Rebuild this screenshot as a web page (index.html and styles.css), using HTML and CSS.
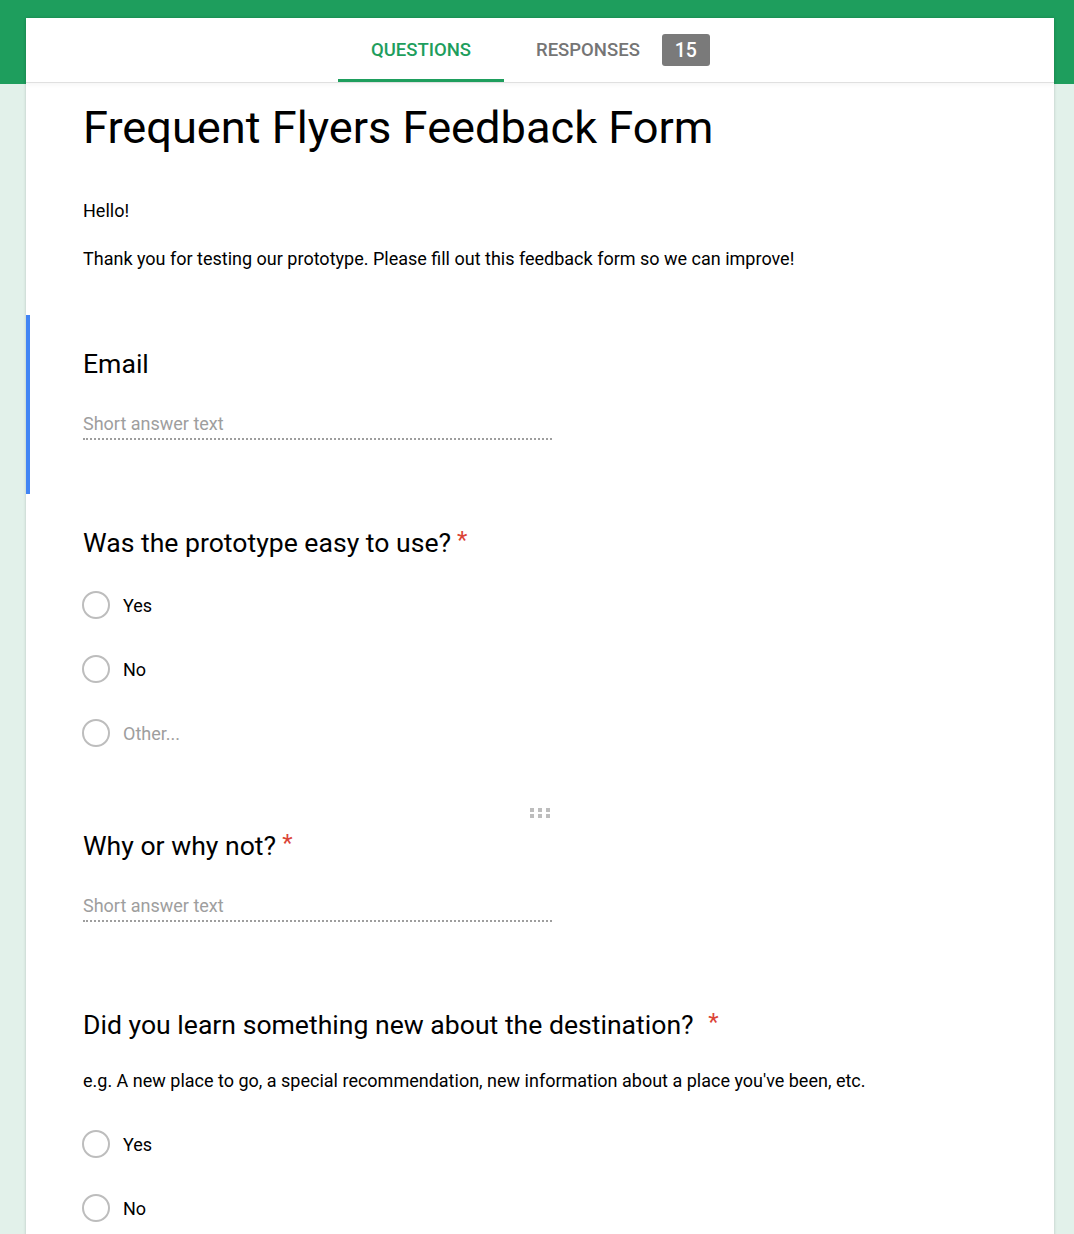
FILE: index.html
```html
<!DOCTYPE html>
<html>
<head>
<meta charset="utf-8">
<link rel="stylesheet" href="styles.css">
</head>
<body>
<div class="card">
  <div class="tabs">
    <div class="tab active">QUESTIONS</div>
    <div class="tab">RESPONSES</div>
    <div class="badge">15</div>
  </div>
  <div class="intro">
    <h1 class="title">Frequent Flyers Feedback Form</h1>
    <p class="desc">Hello!</p>
    <p class="desc">Thank you for testing our prototype. Please fill out this feedback form so we can improve!</p>
  </div>
  <div class="item selected">
    <div class="q">Email</div>
    <div class="short">Short answer text</div>
  </div>
  <div class="item q2">
    <div class="q">Was the prototype easy to use?<span class="req">*</span></div>
    <div class="options">
      <div class="opt"><span class="radio"></span><span>Yes</span></div>
      <div class="opt"><span class="radio"></span><span>No</span></div>
      <div class="opt other"><span class="radio"></span><span>Other...</span></div>
    </div>
  </div>
  <div class="item handle-item">
    <div class="handle">
      <svg width="22" height="10" viewBox="0 0 22 10"><g fill="#bdbdbd"><rect x="0" y="0" width="4" height="4"/><rect x="8" y="0" width="4" height="4"/><rect x="16" y="0" width="4" height="4"/><rect x="0" y="6" width="4" height="4"/><rect x="8" y="6" width="4" height="4"/><rect x="16" y="6" width="4" height="4"/></g></svg>
    </div>
    <div class="q">Why or why not?<span class="req">*</span></div>
    <div class="short">Short answer text</div>
  </div>
  <div class="item q4">
    <div class="q">Did you learn something new about the destination? <span class="req wide">*</span></div>
    <div class="help">e.g. A new place to go, a special recommendation, new information about a place you've been, etc.</div>
    <div class="options">
      <div class="opt"><span class="radio"></span><span>Yes</span></div>
      <div class="opt"><span class="radio"></span><span>No</span></div>
    </div>
  </div>
</div>
</body>
</html>
```
FILE: styles.css
```css
html, body {
  margin: 0;
  padding: 0;
}
body {
  font-family: Roboto, "Liberation Sans", Arial, sans-serif;
  background: linear-gradient(#1e9e5d 0, #1e9e5d 84px, #e2f1ea 84px);
  min-height: 1234px;
  color: #000;
}
.card {
  margin: 18px 0 0 26px;
  width: 1028px;
  min-height: 1300px;
  background: #fff;
  box-shadow: 0 0 3px rgba(0,0,0,0.18);
}
.tabs {
  display: flex;
  align-items: center;
  height: 64px;
  padding-left: 312px;
  border-bottom: 1px solid #e0e0e0;
  box-shadow: 0 2px 4px rgba(0,0,0,0.04);
}
.tab {
  font-size: 18.5px;
  font-weight: 500;
  color: #757575;
  height: 64px;
  display: flex;
  align-items: center;
  box-sizing: border-box;
}
.tab.active {
  width: 166px;
  justify-content: center;
  color: #1e9e5d;
  border-bottom: 3px solid #1e9e5d;
  padding-top: 3px;
  margin-right: 32px;
}
.badge {
  margin-left: 22px;
  width: 48px;
  height: 32px;
  border-radius: 3px;
  background: #7a7a7a;
  color: #fff;
  font-size: 19.5px;
  font-weight: 500;
  display: flex;
  align-items: center;
  justify-content: center;
}
.intro {
  padding: 0 57px;
}
.title {
  margin: 17px 0 0;
  font-size: 45.2px;
  font-weight: 400;
  line-height: 56px;
}
.desc {
  margin: 0;
  font-size: 18px;
  line-height: 24px;
}
.intro .title + .desc {
  margin-top: 43px;
}
.desc + .desc {
  margin-top: 24px;
}
.item {
  position: relative;
  padding: 0 57px;
}
.selected {
  margin-top: 44px;
  padding-top: 33px;
  padding-bottom: 54px;
  border-left: 4px solid #4285f4;
  padding-left: 53px;
}
.q {
  font-size: 26.6px;
  line-height: 32px;
}
.req {
  color: #db4437;
  font-size: 24px;
  vertical-align: top;
  margin-left: 6px;
  position: relative;
  top: -3px;
}
.req.wide {
  margin-left: 8px;
}
.short {
  margin-top: 32px;
  width: 469px;
  font-size: 18px;
  color: #9e9e9e;
  line-height: 24px;
  padding-bottom: 2px;
  border-bottom: 2px dotted #9e9e9e;
}
.options {
  margin-top: 32px;
  display: flex;
  flex-direction: column;
  gap: 36px;
}
.opt {
  display: flex;
  align-items: center;
  height: 28px;
  font-size: 18px;
}
.other {
  color: #9e9e9e;
}
.radio {
  width: 24px;
  height: 24px;
  border: 2px solid #bdbdbd;
  border-radius: 50%;
  margin-right: 13px;
  margin-left: -1px;
}
.q2 {
  margin-top: 33px;
}
.handle-item {
  margin-top: 56px;
  padding-top: 27px;
}
.handle {
  position: absolute;
  top: 0;
  left: 504px;
}
.q4 {
  margin-top: 87px;
}
.help {
  margin-top: 28px;
  font-size: 18px;
  line-height: 24px;
}
.help + .options {
  margin-top: 37px;
}
```
